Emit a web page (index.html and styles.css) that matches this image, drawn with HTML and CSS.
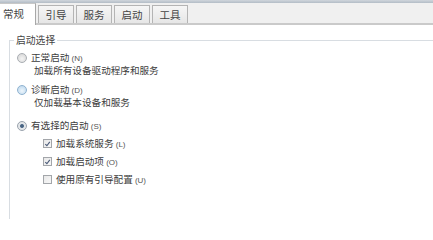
FILE: index.html
```html
<!DOCTYPE html>
<html lang="zh-CN">
<head>
<meta charset="utf-8">
<link rel="stylesheet" href="styles.css">
</head>
<body>
<div class="topstrip"></div>
<div class="tabbar">
  <div class="tab active">常规</div>
  <div class="tab">引导</div>
  <div class="tab">服务</div>
  <div class="tab">启动</div>
  <div class="tab">工具</div>
</div>
<div class="panel">
  <fieldset class="group">
    <legend class="legend">启动选择</legend>
    <div class="opt opt1">
      <div class="row"><span class="radio"></span><span class="lbl">正常启动 <span class="key">(N)</span></span></div>
      <div class="sub">加载所有设备驱动程序和服务</div>
    </div>
    <div class="opt opt2">
      <div class="row"><span class="radio hover"></span><span class="lbl">诊断启动 <span class="key">(D)</span></span></div>
      <div class="sub">仅加载基本设备和服务</div>
    </div>
    <div class="opt opt3">
      <div class="row"><span class="radio checked"></span><span class="lbl">有选择的启动 <span class="key">(S)</span></span></div>
    </div>
    <div class="checks">
      <div class="crow"><span class="cbox"><svg viewBox="0 0 8 8" width="8" height="8"><path d="M1.5 4.2 L3.3 6 L6.6 1.6" fill="none" stroke="#4a5a78" stroke-width="1.3"/></svg></span><span class="lbl">加载系统服务 <span class="key">(L)</span></span></div>
      <div class="crow"><span class="cbox"><svg viewBox="0 0 8 8" width="8" height="8"><path d="M1.5 4.2 L3.3 6 L6.6 1.6" fill="none" stroke="#4a5a78" stroke-width="1.3"/></svg></span><span class="lbl">加载启动项 <span class="key">(O)</span></span></div>
      <div class="crow"><span class="cbox"></span><span class="lbl">使用原有引导配置 <span class="key">(U)</span></span></div>
    </div>
  </fieldset>
</div>
</body>
</html>
```
FILE: styles.css
```css
html, body {
  margin: 0;
  padding: 0;
  background: #ffffff;
  width: 433px;
  height: 228px;
  overflow: hidden;
  font-family: "Noto Sans CJK SC", "Noto Sans", sans-serif;
  color: #3c3c3c;
}
.topstrip {
  height: 3px;
  background: linear-gradient(to bottom, #d0d6dc, #b3bcc6);
}
.tabbar {
  display: flex;
  height: 20px;
  background: #f0f0f0;
  border-bottom: 2px solid #cacaca;
  box-sizing: content-box;
}
.tab {
  width: 36px;
  margin-left: 2px;
  margin-top: 2px;
  height: 18px;
  box-sizing: border-box;
  border: 1px solid #b4b4b4;
  border-bottom: none;
  background: linear-gradient(to bottom, #f6f6f6, #e6e6e6);
  font-size: 10.5px;
  line-height: 17px;
  text-align: center;
  color: #444444;
}
.tab:first-child {
  margin-left: 0;
}
.tab.active {
  margin-top: 0;
  height: 22px;
  margin-bottom: -2px;
  background: #ffffff;
  border-left: none;
  border-top: 1px solid #c8c8c8;
  border-right: 1px solid #a8a8a8;
  line-height: 20px;
  text-align: left;
  padding-left: 3px;
}
.panel {
  padding-top: 9px;
}
.group {
  margin: 0 0 0 9px;
  padding: 0;
  border: none;
  border-top: 1px solid #d8dde2;
  border-left: 1px solid #d8dde2;
  height: 185px;
  box-sizing: border-box;
  min-width: 0;
}
.legend {
  margin-left: 4px;
  padding: 0 2px;
  font-size: 9.8px;
  line-height: 13px;
  color: #444444;
}
.opt {
  font-size: 9.6px;
  line-height: 13px;
}
.opt1 { margin-top: 4px; }
.opt2 { margin-top: 6px; }
.opt3 { margin-top: 10px; }
.row, .crow {
  display: flex;
  align-items: center;
  height: 13px;
}
.lbl {
  display: block;
  height: 13px;
  line-height: 13px;
  white-space: nowrap;
}
.radio {
  width: 10px;
  height: 10px;
  box-sizing: border-box;
  border-radius: 50%;
  margin-left: 7px;
  margin-right: 4px;
  border: 1px solid #a9adb2;
  background: radial-gradient(circle at 50% 60%, #f4f4f4 0%, #dcdcdc 70%);
}
.radio.hover {
  border-color: #8fb2d0;
  background: radial-gradient(circle at 50% 60%, #eef6fc 0%, #c4dcef 75%);
}
.radio.checked {
  border-color: #9aa3ad;
  background: radial-gradient(circle, #3f5a78 0%, #5b7592 32%, #e2e6ea 40%, #e8e8e8 100%);
}
.sub {
  margin-left: 24px;
  height: 13px;
  white-space: nowrap;
}
.key {
  font-family: "Liberation Sans", sans-serif;
  font-size: 8px;
  line-height: 13px;
  color: #555;
}
.checks {
  margin-top: 5px;
  display: flex;
  flex-direction: column;
  gap: 5px;
  font-size: 9.6px;
  line-height: 13px;
}
.cbox {
  width: 9px;
  height: 9px;
  box-sizing: border-box;
  margin-left: 33px;
  margin-right: 4px;
  border: 1px solid #a3a6aa;
  background: linear-gradient(to bottom right, #e8e8e8, #f8f8f8);
  display: flex;
  align-items: center;
  justify-content: center;
}
.cbox svg {
  display: block;
}
```
